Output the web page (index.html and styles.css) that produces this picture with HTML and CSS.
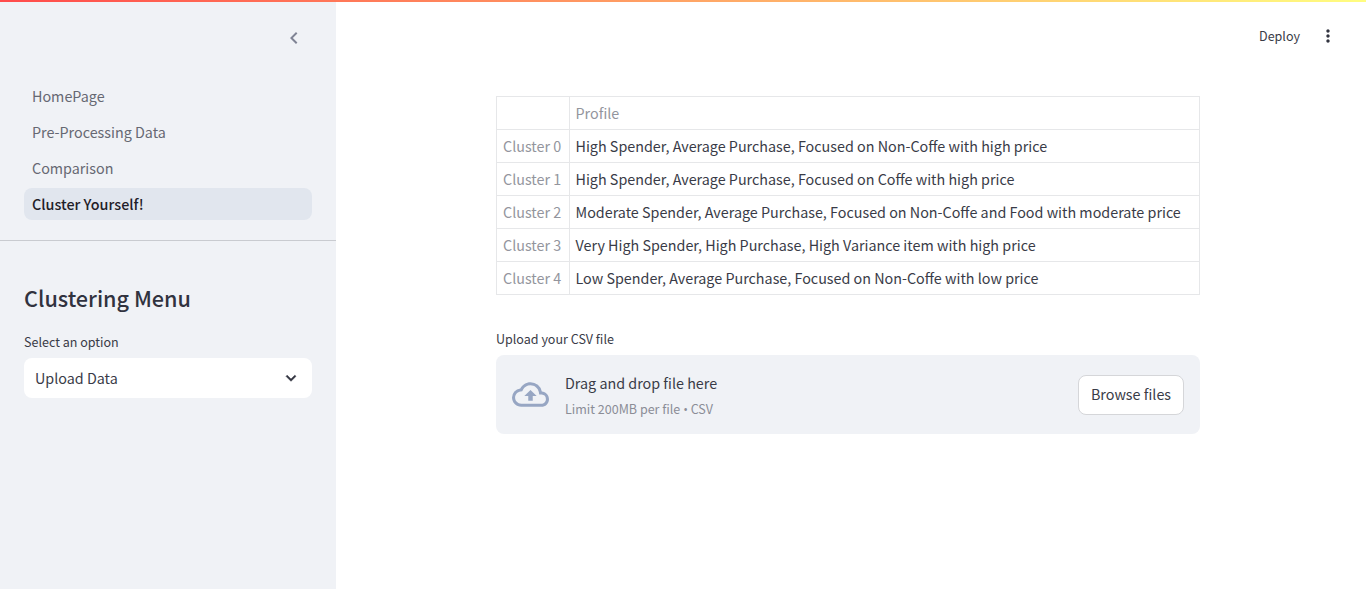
FILE: index.html
```html
<!DOCTYPE html>
<html lang="en">
<head>
<meta charset="utf-8">
<title>Cluster Yourself!</title>
<link rel="stylesheet" href="styles.css">
</head>
<body>
<div class="decoration"></div>
<div class="app">
  <aside class="sidebar">
    <div class="sidebar-header">
      <button class="icon-button" aria-label="Collapse sidebar">
        <svg class="collapse-icon" viewBox="0 0 24 24"><path d="M15.41 7.41 14 6l-6 6 6 6 1.41-1.41L10.83 12z"/></svg>
      </button>
    </div>
    <nav class="nav">
      <a class="nav-link">HomePage</a>
      <a class="nav-link">Pre-Processing Data</a>
      <a class="nav-link">Comparison</a>
      <a class="nav-link active">Cluster Yourself!</a>
    </nav>
    <section class="sidebar-content">
      <h2 class="heading">Clustering Menu</h2>
      <div class="label">Select an option</div>
      <div class="select">
        <span>Upload Data</span>
        <svg class="select-icon" viewBox="0 0 24 24"><path d="M16.59 8.59 12 13.17 7.41 8.59 6 10l6 6 6-6z"/></svg>
      </div>
    </section>
  </aside>
  <main class="main">
    <header class="toolbar">
      <span class="deploy">Deploy</span>
      <svg class="menu-icon" viewBox="0 0 24 24"><path d="M12 8c1.1 0 2-.9 2-2s-.9-2-2-2-2 .9-2 2 .9 2 2 2zm0 2c-1.1 0-2 .9-2 2s.9 2 2 2 2-.9 2-2-.9-2-2-2zm0 6c-1.1 0-2 .9-2 2s.9 2 2 2 2-.9 2-2-.9-2-2-2z"/></svg>
    </header>
    <div class="block">
      <table class="table">
        <thead><tr><th class="index"></th><th>Profile</th></tr></thead>
        <tbody>
          <tr><th>Cluster 0</th><td>High Spender, Average Purchase, Focused on Non-Coffe with high price</td></tr>
          <tr><th>Cluster 1</th><td>High Spender, Average Purchase, Focused on Coffe with high price</td></tr>
          <tr><th>Cluster 2</th><td>Moderate Spender, Average Purchase, Focused on Non-Coffe and Food with moderate price</td></tr>
          <tr><th>Cluster 3</th><td>Very High Spender, High Purchase, High Variance item with high price</td></tr>
          <tr><th>Cluster 4</th><td>Low Spender, Average Purchase, Focused on Non-Coffe with low price</td></tr>
        </tbody>
      </table>
      <div class="label">Upload your CSV file</div>
      <div class="dropzone">
        <svg class="cloud-icon" viewBox="0 0 24 24"><path d="M19.35 10.04A7.49 7.49 0 0 0 12 4C9.11 4 6.6 5.64 5.35 8.04A5.994 5.994 0 0 0 0 14c0 3.31 2.69 6 6 6h13c2.76 0 5-2.24 5-5 0-2.64-2.05-4.78-4.65-4.96zM19 18H6c-2.21 0-4-1.79-4-4 0-2.05 1.53-3.76 3.56-3.97l1.07-.11.5-.95A5.469 5.469 0 0 1 12 6c2.62 0 4.88 1.86 5.39 4.43l.3 1.5 1.53.11A2.98 2.98 0 0 1 22 15c0 1.65-1.35 3-3 3zM8 13h2.55v3h2.9v-3H16l-4-4z"/></svg>
        <div class="instructions">
          <span class="drop-title">Drag and drop file here</span>
          <small class="drop-limit">Limit 200MB per file <span class="bullet">•</span> CSV</small>
        </div>
        <button class="browse">Browse files</button>
      </div>
    </div>
  </main>
</div>
</body>
</html>
```
FILE: styles.css
```css
* { box-sizing: border-box; }
body {
  margin: 0;
  font: 400 14.33px/24px "Noto Sans CJK JP", "Noto Sans", sans-serif;
  color: #393b47;
  background: #fff;
}
button { font: inherit; color: inherit; }
.decoration {
  position: absolute;
  top: 0;
  left: 0;
  right: 0;
  height: 2px;
  background: linear-gradient(90deg, #ff4b4b, #fffd80);
}
.app { display: flex; height: 589px; overflow: hidden; }
.sidebar { width: 336px; flex: none; background: #f0f2f6; }
.sidebar-header { display: flex; justify-content: flex-end; padding: 26px 30px 0 0; height: 80px; }
.icon-button { display: flex; border: 0; padding: 0; background: none; height: 24px; }
.collapse-icon { width: 24px; height: 24px; fill: #808495; }
.nav {
  display: flex;
  flex-direction: column;
  gap: 4px;
  padding: 0 24px 20px;
  border-bottom: 1px solid #c9cbd0;
}
.nav-link { height: 32px; padding: 0 8px; line-height: 32px; border-radius: 8px; color: #666872; }
.nav-link.active { background: #e1e6ee; color: #1f2028; font-weight: 500; }
.sidebar-content { padding: 39px 24px 0; }
.heading { margin: 0 0 15px; font-size: 21.6px; line-height: 36px; font-weight: 500; color: #31333f; }
.label { font-size: 12.54px; line-height: 21px; }
.select {
  display: flex;
  align-items: center;
  justify-content: space-between;
  height: 40px;
  margin-top: 6px;
  padding: 0 11px;
  background: #fff;
  border-radius: 8px;
}
.select-icon { width: 20px; height: 20px; fill: #31333f; stroke: #31333f; stroke-width: .6; }
.main { flex: 1; }
.toolbar { display: flex; justify-content: flex-end; align-items: center; gap: 18px; height: 72px; padding-right: 28px; }
.deploy { font-size: 12.54px; }
.menu-icon { width: 20px; height: 20px; fill: #31333f; }
.block { width: 704px; margin: 24px 0 0 160px; }
.table { width: 704px; border-collapse: collapse; margin-bottom: 33px; }
.table th, .table td {
  height: 33px;
  padding: 0 5.5px;
  border: 1px solid #e6e7e9;
  text-align: left;
  font-weight: 400;
}
.table th { color: #93959d; }
.table tbody th { padding-left: 6px; }
.table .index { width: 73px; }
.dropzone {
  display: flex;
  align-items: center;
  height: 79px;
  margin-top: 6px;
  padding: 0 16px;
  background: #f0f2f6;
  border-radius: 8px;
}
.cloud-icon { width: 37px; height: 37px; margin-right: 16px; fill: #97a6c3; }
.instructions { display: flex; flex: 1; flex-direction: column; gap: 4px; padding-top: 2px; }
.drop-limit { font-size: 12.54px; line-height: 20px; color: #8b8d96; }
.bullet { font-family: "Open Sans", sans-serif; }
.browse { width: 106px; height: 40px; padding: 0 0 2px; border: 1px solid #d5d6d9; border-radius: 8px; background: #fff; }
```
